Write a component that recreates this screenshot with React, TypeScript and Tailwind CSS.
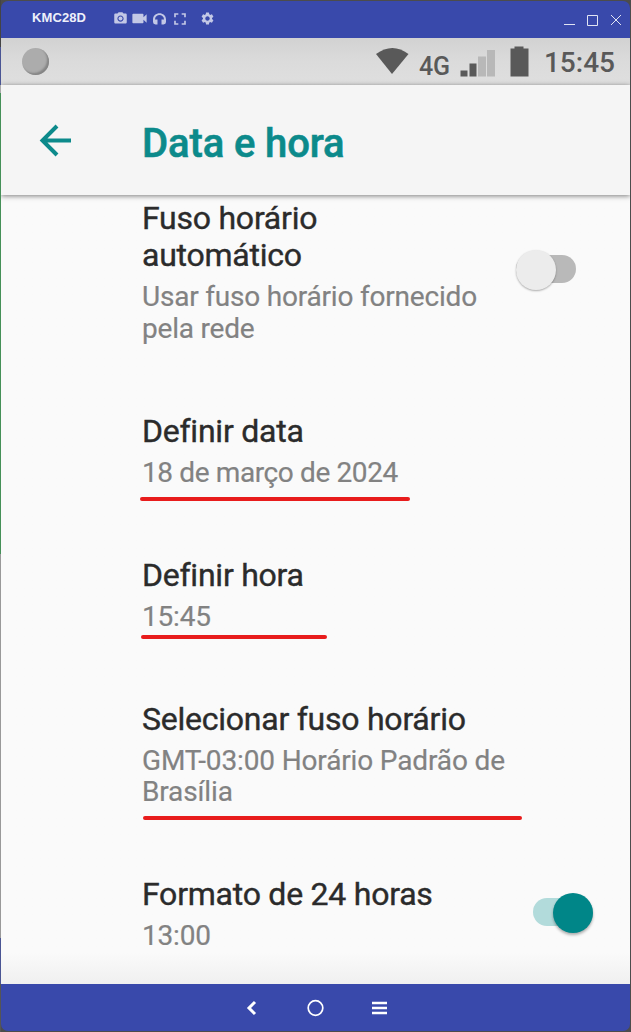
import { MdPhotoCamera, MdVideocam, MdFullscreen, MdSettings } from 'react-icons/md';

const items = [
  { title: ['Fuso horário', 'automático'], summary: ['Usar fuso horário fornecido', 'pela rede'], spacing: 'tracking-[-0.2px]', toggle: 'off' },
  { title: ['Definir data'], summary: ['18 de março de 2024'], spacing: 'tracking-[-0.38px]', line: 'left-[-2px] bottom-[-13px] w-[270px]' },
  { title: ['Definir hora'], summary: ['15:45'], spacing: 'tracking-[-0.2px]', line: 'left-[-1px] bottom-[-6.5px] w-[186px]' },
  { title: ['Selecionar fuso horário'], summary: ['GMT-03:00 Horário Padrão de', 'Brasília'], spacing: 'tracking-[-0.14px]', line: 'left-[1px] bottom-[-12.5px] w-[379px]' },
  { title: ['Formato de 24 horas'], summary: ['13:00'], spacing: 'tracking-[-0.2px]', toggle: 'on' },
];

const TitleBar = () => (
  <div className="flex h-[37px] shrink-0 items-center bg-[#3949ab] pl-[31px] pr-[7px] text-[#c3c8e6]">
    <span className="mb-[4px] w-[81px] font-['Liberation_Sans',sans-serif] text-[13px] font-bold tracking-[0.1px] text-[#eef0fa]">
      KMC28D
    </span>
    <div className="mb-[2px] flex items-center gap-[6px]">
      <MdPhotoCamera size={15} />
      <MdVideocam size={19} className="-ml-[4px] -mr-[2px]" />
      <svg width="13" height="12" viewBox="0 0 13 12" fill="currentColor">
        <path d="M0 6.500C0-2 13-2 13 6.500V9q0 2-2.500 2.500H8.500V6.500h2.500C11 .5 2 .5 2 6.500h2.500v5H2.500Q0 11 0 9z" />
      </svg>
      <MdFullscreen size={20} className="-ml-[2px]" />
    </div>
    <MdSettings size={15} className="mb-[2px] ml-[10px]" />
    <svg className="ml-auto" width="60" height="14" viewBox="0 0 60 14" fill="none" stroke="#e1e4f3">
      <path d="M1 11.5h11M24.5 2.5h10v10h-10zM48 2l10 10M58 2L48 12" />
    </svg>
  </div>
);

const StatusBar = () => (
  <div className="flex h-[47px] shrink-0 items-center bg-linear-to-b from-[#d2d2d2] via-[#dbdbdb] to-[#dfdfdf] pl-[21px] pr-[15px] text-[#595959]">
    <div className="h-[27px] w-[27px] rounded-full bg-[#acacac] shadow-[inset_-2px_-2px_2px_#858585] blur-[0.5px]"></div>
    <svg className="ml-auto" width="34" height="28" viewBox="0 0 34 28" fill="#595959">
      <path d="M1 6q16.500-12 32.500 0L17 26z" />
    </svg>
    <span className="ml-[10px] mt-[11px] w-[31px] text-[25px] leading-[30px] font-medium tracking-[-0.2px]">4G</span>
    <svg className="ml-[10px]" width="70" height="34" viewBox="460 44 70 34" fill="#595959">
      <path d="M460.500 69.500h7v6h-7zM469.500 62.500h7v13h-7z" />
      <path d="M478 55.500h8v20h-8zM487 49h8v26.500h-8z" fill="#b8b8b8" />
      <path d="M510.500 47.500h4v-2h9v2h5v28h-18z" />
    </svg>
    <span className="ml-[14px] mt-[2px] text-[28px] font-medium">15:45</span>
  </div>
);

const Toggle = ({ on }: { on: boolean }) =>
  on ? (
    <div className="mb-[3px] mr-[37px] flex h-[28px] w-[60px] items-center justify-end rounded-full bg-[#b2dbdb]">
      <div className="mt-[2px] h-10 w-10 shrink-0 rounded-full bg-[#008688] shadow-[0_2px_3px_#00000050]"></div>
    </div>
  ) : (
    <div className="mb-[6px] mr-[54px] flex h-[28px] w-[60px] items-center rounded-full bg-[#b9b9b9]">
      <div className="mt-[3px] h-10 w-10 shrink-0 rounded-full bg-[#ececec] shadow-[0_1px_2px_#00000050]"></div>
    </div>
  );

const Settings = () => (
  <div className="flex grow flex-col gap-[68.5px] bg-linear-to-b from-[#fafafa] from-96% to-[#f0f0f0] pl-[141px] pt-[4.5px]">
    {items.map(item => (
      <div key={item.title[0]} className="relative flex items-center justify-between">
        <div className="whitespace-nowrap">
          {item.title.map(t => (
            <div key={t} className="text-[32px] leading-[37.5px] tracking-[-0.24px] text-[#2b2b2b] [-webkit-text-stroke:0.4px_#2b2b2b]">{t}</div>
          ))}
          <div className="mt-[6.5px]">
            {item.summary.map(s => (
              <div key={s} className={`text-[28px] leading-[31.5px] text-[#828282] [-webkit-text-stroke:0.2px_#828282] ${item.spacing}`}>{s}</div>
            ))}
          </div>
        </div>
        {item.toggle && <Toggle on={item.toggle === 'on'} />}
        {item.line && <div className={`absolute h-1 rounded-full bg-[#e81c1c] ${item.line}`}></div>}
      </div>
    ))}
  </div>
);

const App = () => {
  return (
    <div className="flex h-[1032px] w-[631px] bg-[#4c4c4c] font-[Roboto,sans-serif]">
      <div className="flex w-px flex-col">
        <div className="h-[47px] bg-[#444]"></div>
        <div className="h-[38px] bg-[#4a5594]"></div>
        <div className="h-[8px] bg-[#aaa]"></div>
        <div className="h-[461px] bg-[#459058]"></div>
        <div className="h-[384px] bg-[#999]"></div>
        <div className="h-[46px] bg-[#4a5594]"></div>
        <div className="grow bg-[#555]"></div>
      </div>
      <div className="my-px mr-px flex grow flex-col overflow-hidden rounded-[7px]">
        <TitleBar />
        <StatusBar />
        <div className="z-10 flex h-[110px] shrink-0 items-center bg-[#f5f5f5] pl-[38px] text-[#0c8a8b] shadow-[0_1px_5px_#00000080]">
          <svg width="34" height="34" viewBox="0 0 34 34" fill="none" stroke="#0c8a8b" strokeWidth="4">
            <path d="M32 17.500H4M18 3L3.500 17.500L18 32" />
          </svg>
          <span className="ml-[69px] mt-[7px] text-[40px] font-medium tracking-[-0.12px] [-webkit-text-stroke:0.6px_#0c8a8b]">Data e hora</span>
        </div>
        <Settings />
        <div className="flex h-[47px] shrink-0 items-center justify-center bg-[#3949ab]">
          <svg width="142" height="20" viewBox="0 0 142 20" fill="none" stroke="#fff">
            <path d="M10 4L4 10L10 16" strokeWidth="3" />
            <circle cx="70.500" cy="10" r="7.300" strokeWidth="1.700" />
            <path d="M127 5h15M127 10h15M127 15h15" strokeWidth="2.500" />
          </svg>
        </div>
      </div>
    </div>
  );
};

export default App;
